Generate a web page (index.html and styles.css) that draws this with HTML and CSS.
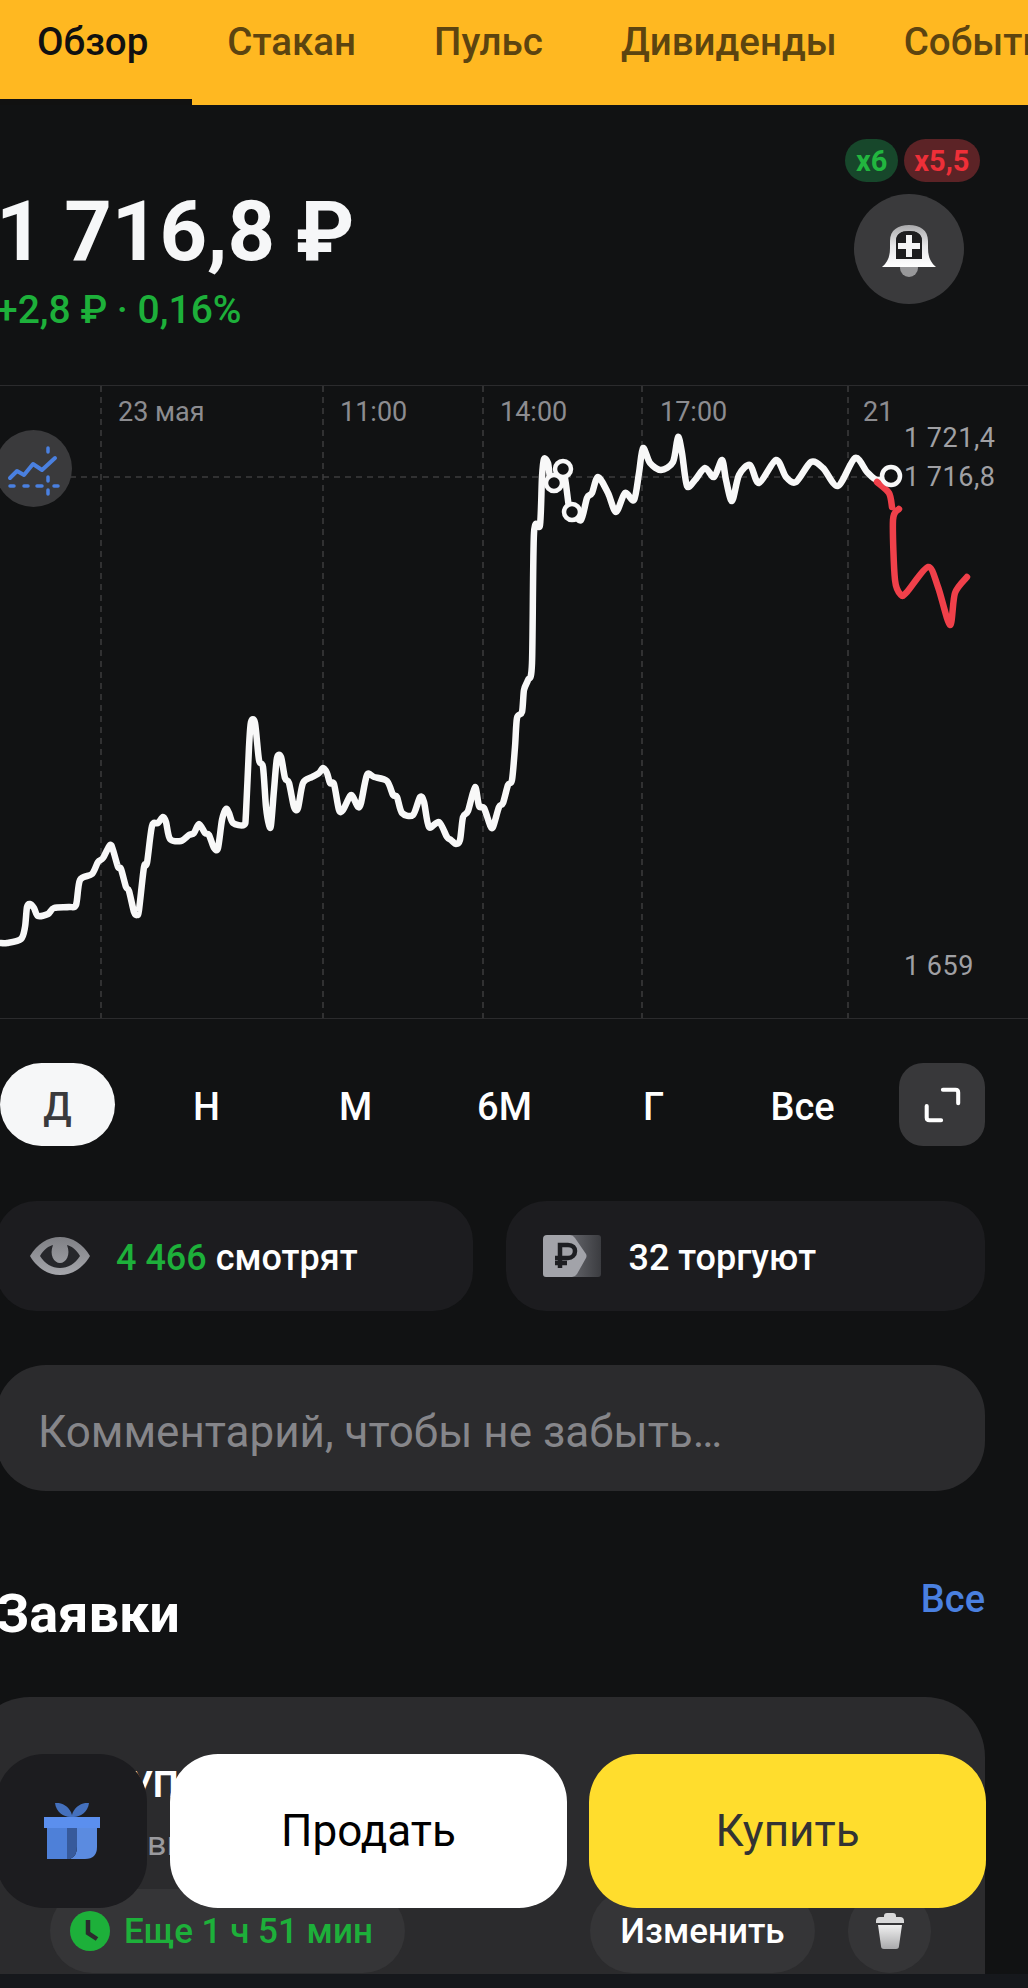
FILE: index.html
```html
<!DOCTYPE html>
<html lang="ru">
<head>
    <meta charset="utf-8">
    <title>Обзор</title>
    <link rel="stylesheet" href="styles.css">
</head>
<body>
<div class="page">
    <!-- top tabs -->
    <nav class="tabs">
        <a class="tab active">Обзор</a>
        <a class="tab">Стакан</a>
        <a class="tab">Пульс</a>
        <a class="tab">Дивиденды</a>
        <a class="tab tab-last">События</a>
    </nav>

    <main class="content">
        <!-- price -->
        <header class="quote">
            <div class="quote-left">
                <div class="price">1 716,8 ₽</div>
                <div class="change">+2,8 ₽ · 0,16%</div>
            </div>
            <div class="quote-right">
                <div class="chips">
                    <span class="chip chip-green">x6</span>
                    <span class="chip chip-red">x5,5</span>
                </div>
                <button class="bell">
                    <svg width="60" height="56" viewBox="0 0 60 56">
                        <defs>
                            <linearGradient id="bellGrad" x1="0" y1="0" x2="0" y2="1">
                                <stop offset="0" stop-color="#a9a9ab"/>
                                <stop offset="0.5" stop-color="#e8e8ea"/>
                                <stop offset="1" stop-color="#ffffff"/>
                            </linearGradient>
                        </defs>
                        <circle cx="30" cy="47" r="9" fill="#98989a"/>
                        <path d="M3 46 C9 41 11 35 11 27 V20 C11 9 19 4 30 4 C41 4 49 9 49 20 V27 C49 35 51 41 57 46 Z M17 38 H43 V20 C43 13 38 10 30 10 C22 10 17 13 17 20 Z" fill="url(#bellGrad)" fill-rule="evenodd"/>
                        <path d="M17 38 H43 V20 C43 13 38 10 30 10 C22 10 17 13 17 20 Z" fill="#1d1d1f"/>
                        <path d="M27 14 H33 V22 H41 V28 H33 V36 H27 V28 H19 V22 H27 Z" fill="#f4f4f5"/>
                    </svg>
                </button>
            </div>
        </header>

        <!-- chart -->
        <section class="chart">
            <svg class="chart-svg" width="1028" height="634" viewBox="0 385 1028 634">
                <g class="grid">
                    <line x1="101" y1="386" x2="101" y2="1018"/>
                    <line x1="323" y1="386" x2="323" y2="1018"/>
                    <line x1="483" y1="386" x2="483" y2="1018"/>
                    <line x1="642" y1="386" x2="642" y2="1018"/>
                    <line x1="848" y1="386" x2="848" y2="1018"/>
                    <line x1="70" y1="477" x2="895" y2="477"/>
                </g>
                <path class="line-white" data-points="0,943 7,943 21,939 25,927 27,907 30,904 34,908 38,916 48,914 54,908 69,907 76,905 80,880 92,874 98,862 103,858 110,845 113,850 118,867 121,869 126,887 129,891 134,912 137,915 139,910 144,867 147,863 152,826 158,823 163,817 166,822 170,839 181,841 189,835 194,833 199,824 205,833 209,835 214,848 218,848 222,820 226,809 229,813 233,823 244,825 246,813 249,747 251,722 255,723 259,760 263,767 266,807 269,825 271,825 274,790 277,758 281,757 285,778 289,783 294,807 298,808 303,783 312,777 319,773 323,768 327,773 330,783 334,784 339,810 343,810 350,796 353,797 358,807 361,803 367,775 374,777 387,781 393,795 397,797 402,813 413,815 420,797 424,802 429,827 439,822 447,837 451,840 456,844 460,840 463,817 468,811 475,787 479,806 484,808 490,825 493,827 499,807 503,803 508,785 512,780 515,747 517,718 522,712 524,690 528,680 532,663 534,533 540,525 542,477 544,459 548,463 550,477 554,483 563,469 569,507 572,512 581,520 587,498 592,493 598,477 608,493 616,512 625,493 634,500 639,473 643,448 650,463 661,470 673,462 678,437 682,453 687,486 695,480 705,468 714,477 722,460 726,480 732,501 739,475 750,465 759,483 776,460 786,477 796,482 811,462 823,468 838,486 855,458 867,472 877,480 891,476"/>
                <path class="line-red" data-points="877,482 889,493 892,507"/>
                <path class="line-red" data-points="899,509 893,520 895,580 901,595 907,592 928,567 938,587 950,625 955,593 967,577"/>
                <circle class="dot" cx="554" cy="483" r="8"/>
                <circle class="dot" cx="563" cy="469" r="8"/>
                <circle class="dot" cx="572" cy="512" r="8"/>
                <circle class="dot" cx="891" cy="476" r="9"/>
            </svg>

            <span class="time" style="left:118px">23 мая</span>
            <span class="time" style="left:340px">11:00</span>
            <span class="time" style="left:500px">14:00</span>
            <span class="time" style="left:660px">17:00</span>
            <span class="time time-cut" style="left:863px">21:00</span>

            <span class="level" style="top:37px">1 721,4</span>
            <span class="level" style="top:76px">1 716,8</span>
            <span class="level" style="top:565px">1 659</span>

            <button class="tools">
                <svg width="60" height="56" viewBox="0 0 60 56" fill="none" stroke="#4a80e0" stroke-linecap="round" stroke-linejoin="round">
                    <polyline points="6,37 13,30 20,34 29,23 38,29 51,17" stroke-width="4"/>
                    <path d="M6 45 H10 M20 45 H24 M33 45 H38 M50 45 H54" stroke-width="3.5"/>
                    <path d="M44 7 V11 M44 36 V40 M44 49 V53" stroke-width="3.5"/>
                </svg>
            </button>
        </section>

        <!-- period switch -->
        <div class="periods">
            <div class="period-list">
                <span class="period"><b class="period-pill selected">Д</b></span>
                <span class="period"><b class="period-pill">Н</b></span>
                <span class="period"><b class="period-pill">М</b></span>
                <span class="period"><b class="period-pill">6М</b></span>
                <span class="period"><b class="period-pill">Г</b></span>
                <span class="period"><b class="period-pill">Все</b></span>
            </div>
            <button class="expand">
                <svg width="38" height="36" viewBox="0 0 42 40" fill="none" stroke="#fff" stroke-width="4.5" stroke-linecap="round" stroke-linejoin="round">
                    <path d="M22 3 H36 Q39 3 39 6 V18"/>
                    <path d="M4 21 V34 Q4 37 7 37 H20"/>
                </svg>
            </button>
        </div>

        <!-- watchers -->
        <div class="stats">
            <div class="stat">
                <svg class="stat-icon" width="60" height="38" viewBox="0 0 60 38">
                    <defs>
                        <linearGradient id="eyeGrad" x1="0" y1="0" x2="0" y2="1">
                            <stop offset="0" stop-color="#7f8085"/>
                            <stop offset="1" stop-color="#a5a6ab"/>
                        </linearGradient>
                    </defs>
                    <path d="M0 19 C7 7 18 0 30 0 C42 0 53 7 60 19 C53 31 42 38 30 38 C18 38 7 31 0 19 Z" fill="url(#eyeGrad)"/>
                    <path d="M10 19 C14 12 19 9 23 8 C19 18 24 26 30 26 C36 26 41 18 37 8 C41 9 46 12 50 19 C45 27 38 31 30 31 C22 31 15 27 10 19 Z" fill="#26272b"/>
                </svg>
                <span class="stat-text"><span class="green">4 466</span> смотрят</span>
            </div>
            <div class="stat stat-second">
                <svg class="stat-icon" width="58" height="42" viewBox="0 0 58 42">
                    <defs>
                        <linearGradient id="backGrad" x1="0" y1="0" x2="1" y2="0">
                            <stop offset="0" stop-color="#707177"/>
                            <stop offset="1" stop-color="#3b3c40"/>
                        </linearGradient>
                    </defs>
                    <rect x="18" y="0" width="40" height="42" rx="3" fill="url(#backGrad)"/>
                    <path d="M4 0 H27 Q30 0 32 3 L43 19 Q44 21 43 23 L34 39 Q32 42 29 42 H3 Q0 42 0 39 V4 Q0 0 4 0 Z" fill="#a2a3a9"/>
                    <path d="M17 33 V10 H25 C30 10 32 13 32 16 C32 20 29 23 25 23 H12 M12 28 H24" fill="none" stroke="#1d1e22" stroke-width="4.5"/>
                </svg>
                <span class="stat-text">32 торгуют</span>
            </div>
        </div>

        <!-- comment field -->
        <div class="comment">Комментарий, чтобы не забыть…</div>

        <!-- orders -->
        <div class="orders-head">
            <h2>Заявки</h2>
            <a class="all-link">Все</a>
        </div>
        <section class="order-card">
            <div class="order-title">КУПЛЯ</div>
            <div class="order-sub">выставлена</div>
            <div class="order-actions">
                <span class="pill pill-time">
                    <svg width="40" height="40" viewBox="0 0 40 40">
                        <circle cx="20" cy="20" r="20" fill="#1db03a"/>
                        <path d="M18 9 V22 L27 28" fill="none" stroke="#2b2b2d" stroke-width="4.5"/>
                    </svg>
                    Еще 1 ч 51 мин
                </span>
                <span class="pill pill-edit">Изменить</span>
                <span class="pill pill-trash">
                    <svg width="28" height="36" viewBox="0 0 28 36">
                        <defs>
                            <linearGradient id="trashGrad" x1="0" y1="0" x2="0" y2="1">
                                <stop offset="0" stop-color="#f0f0f0"/>
                                <stop offset="1" stop-color="#a9a9ab"/>
                            </linearGradient>
                        </defs>
                        <path d="M8 3 Q8 0 11 0 H17 Q20 0 20 3 V4 H24 Q28 4 28 8 V10 H0 V8 Q0 4 4 4 H8 Z" fill="#d8d8d9"/>
                        <path d="M2 12 H26 L23 33 Q23 36 20 36 H8 Q5 36 5 33 Z" fill="url(#trashGrad)"/>
                    </svg>
                </span>
            </div>
        </section>
    </main>

    <div class="navbar"></div>

    <!-- floating buttons over the card -->
    <div class="actions">
        <button class="gift">
            <svg width="56" height="56" viewBox="0 0 56 56">
                <path d="M26 14 C20 14 12 9 11 0 C18 -1 26 4 28 12 C30 4 38 -1 45 0 C44 9 36 14 30 14 Z" fill="#4470bd"/>
                <rect x="0" y="14" width="56" height="11" fill="#5b8fee"/>
                <path d="M3 25 H23 V56 H3 Z" fill="#4e80d8"/>
                <path d="M33 25 H53 V44 Q53 56 41 56 H26 Q33 53 33 44 Z" fill="#5b8be0"/>
                <path d="M23 25 H33 V44 Q33 53 26 56 H23 Z" fill="#375a9b"/>
            </svg>
        </button>
        <button class="trade sell">Продать</button>
        <button class="trade buy">Купить</button>
    </div>
</div>
<script src="script.js"></script>
</body>
</html>
```

FILE: styles.css
```css
:root {
    --bg: #111213;
    --card: #2b2b2d;
    --card-dark: #1c1c1f;
    --green: #1db03a;
    --blue: #4a80e0;
    --muted: #8c8c90;
}

* {
    box-sizing: border-box;
}

body {
    margin: 0;
    background-color: var(--bg);
    color: #fff;
    font-family: Roboto, "Liberation Sans", sans-serif;
}

button {
    border: none;
    padding: 0;
    font-family: inherit;
    color: inherit;
}

.page {
    position: relative;
    display: flex;
    flex-direction: column;
    width: 1028px;
    height: 1988px;
    overflow: hidden;
}

/* Tabs */
.tabs {
    display: flex;
    flex: none;
    height: 105px;
    background-color: #ffb821;
    overflow: hidden;
    font-size: 38.5px;
    font-weight: 500;
    color: #5c4410;
}

.tab {
    flex: none;
    padding: 19px 39px 0;
    white-space: nowrap;
}

.tab.active {
    margin-right: -4px;
    padding: 19px 44px 0 37px;
    color: #111;
    border-bottom: 6px solid #111;
}

.tab-last {
    margin-left: -11px;
}

/* Content */
.content {
    flex: 1;
    min-height: 0;
    overflow: hidden;
}

.quote {
    display: flex;
    justify-content: space-between;
    height: 280px;
    padding-right: 48px;
}

.quote-left {
    margin-left: -4px;
    padding-top: 77px;
}

.price {
    font-size: 83px;
    font-weight: 700;
    line-height: 100px;
    color: #f6f7f8;
}

.change {
    margin-top: 8px;
    font-size: 39px;
    font-weight: 500;
    line-height: 40px;
    color: var(--green);
}

.quote-right {
    display: flex;
    flex-direction: column;
    align-items: flex-end;
    padding-top: 34px;
}

.chips {
    display: flex;
    gap: 6px;
}

.chip {
    display: block;
    height: 43px;
    padding: 0 10.5px;
    border-radius: 22px;
    font-size: 29px;
    font-weight: 700;
    line-height: 44px;
}

.chip-green {
    color: #22b63f;
    background-color: #17472b;
}

.chip-red {
    color: #ee2f38;
    background-color: #5c2326;
}

.bell {
    display: flex;
    align-items: center;
    justify-content: center;
    width: 110px;
    height: 110px;
    margin-top: 12px;
    margin-right: 16px;
    border-radius: 50%;
    background-color: #3a3a3c;
}

/* Chart */
.chart {
    position: relative;
    height: 634px;
    border-top: 1px solid #2b2b2d;
    border-bottom: 1px solid #2b2b2d;
}

.chart-svg {
    position: absolute;
    left: 0;
    top: -1px;
}

.grid line {
    stroke: #3c3c3e;
    stroke-width: 1.5;
    stroke-dasharray: 6 5;
}

.line-white,
.line-red {
    fill: none;
    stroke-width: 6.5;
    stroke-linecap: round;
    stroke-linejoin: round;
}

.line-white {
    stroke: #f8f8f8;
}

.line-red {
    stroke: #f0404a;
}

.dot {
    fill: #111213;
    stroke: #f8f8f8;
    stroke-width: 4.5;
}

.time,
.level {
    position: absolute;
    font-size: 27px;
    line-height: 30px;
    color: var(--muted);
    white-space: nowrap;
}

.time {
    top: 11px;
}

.time-cut {
    width: 29px;
    overflow: hidden;
}

.level {
    left: 904px;
    color: #a0a0a4;
    letter-spacing: 0.5px;
}

.tools {
    position: absolute;
    left: -5px;
    top: 44px;
    display: flex;
    align-items: center;
    justify-content: center;
    width: 77px;
    height: 77px;
    border-radius: 50%;
    background-color: #3a3a3c;
}

/* Periods */
.periods {
    display: flex;
    justify-content: space-between;
    height: 83px;
    margin-top: 44px;
    margin-left: -17px;
    padding-right: 43px;
}

.period-list {
    display: grid;
    grid-template-columns: repeat(6, 149px);
}

.period {
    display: flex;
    justify-content: center;
}

.period-pill {
    width: 115px;
    height: 83px;
    font-size: 38px;
    font-weight: 500;
    line-height: 88px;
    text-align: center;
    border-radius: 42px;
}

.period-pill.selected {
    color: #3a3a3c;
    background-color: #f6f7f8;
}

.expand {
    display: flex;
    align-items: center;
    justify-content: center;
    width: 86px;
    height: 83px;
    border-radius: 24px;
    background-color: #38383a;
}

/* Stats */
.stats {
    display: flex;
    gap: 33px;
    margin-top: 55px;
    margin-left: -4px;
    padding-right: 43px;
}

.stat {
    display: flex;
    flex: 1;
    align-items: center;
    height: 110px;
    padding-left: 34px;
    border-radius: 40px;
    background-color: var(--card-dark);
}

.stat-second {
    padding-left: 37px;
}

.stat-second .stat-text {
    margin-left: 28px;
}

.stat-text {
    margin-left: 26px;
    padding-top: 3px;
    font-size: 36px;
    font-weight: 500;
}

.green {
    color: var(--green);
}

/* Comment */
.comment {
    height: 126px;
    margin-top: 54px;
    margin-left: -4px;
    margin-right: 43px;
    padding-left: 42px;
    border-radius: 50px;
    background-color: var(--card);
    font-size: 44px;
    line-height: 134px;
    white-space: nowrap;
    color: #86868a;
}

/* Orders */
.orders-head {
    display: flex;
    justify-content: space-between;
    height: 206px;
    margin-left: -4px;
    padding-right: 43px;
}

.orders-head h2 {
    margin: 93px 0 0;
    font-size: 54px;
    font-weight: 700;
    line-height: 60px;
}

.all-link {
    margin-top: 88px;
    font-size: 38px;
    font-weight: 500;
    line-height: 40px;
    color: var(--blue);
}

.order-card {
    height: 300px;
    margin-left: -30px;
    margin-right: 43px;
    border-radius: 60px 60px 0 0;
    background-color: var(--card);
}

.order-title {
    padding: 66px 0 0 137px;
    font-size: 36px;
    font-weight: 700;
    line-height: 44px;
}

.order-sub {
    padding: 16px 0 0 177px;
    font-size: 34px;
    line-height: 40px;
    color: #9a9a9e;
}

.order-actions {
    display: flex;
    gap: 33px;
    margin-top: 26px;
    padding-left: 80px;
}

.pill {
    display: flex;
    align-items: center;
    height: 84px;
    border-radius: 42px;
    background-color: #353537;
    font-size: 35px;
    font-weight: 500;
    white-space: nowrap;
}

.pill-time {
    gap: 14px;
    width: 355px;
    padding-left: 20px;
    color: var(--green);
}

.pill-edit {
    justify-content: center;
    width: 225px;
    margin-left: 152px;
}

.pill-trash {
    justify-content: center;
    width: 83px;
}

.navbar {
    flex: none;
    height: 14px;
    background-color: #16181c;
}

/* Floating actions */
.actions {
    position: absolute;
    left: -4px;
    top: 1754px;
    display: flex;
    gap: 23px;
}

.gift {
    display: flex;
    align-items: center;
    justify-content: center;
    width: 151px;
    height: 154px;
    border-radius: 48px;
    background-color: var(--card-dark);
}

.trade {
    width: 397px;
    height: 154px;
    border-radius: 48px;
    font-size: 44px;
}

.sell {
    color: #000;
    background-color: #fff;
}

.buy {
    margin-left: -1px;
    color: #333;
    background-color: #ffdd2d;
}
```

FILE: script.js
```js
// turn the chart points into a smooth line
document.querySelectorAll('[data-points]').forEach(function (line) {
    var pts = line.dataset.points.split(' ').map(function (p) {
        return p.split(',').map(Number);
    });
    var d = 'M' + pts[0].join(' ');
    for (var i = 0; i < pts.length - 1; i++) {
        var p0 = pts[i - 1] || pts[i];
        var p1 = pts[i];
        var p2 = pts[i + 1];
        var p3 = pts[i + 2] || p2;
        var c1x = p1[0] + (p2[0] - p0[0]) / 7;
        var c1y = p1[1] + (p2[1] - p0[1]) / 7;
        var c2x = p2[0] - (p3[0] - p1[0]) / 7;
        var c2y = p2[1] - (p3[1] - p1[1]) / 7;
        d += ' C' + c1x + ' ' + c1y + ' ' + c2x + ' ' + c2y + ' ' + p2[0] + ' ' + p2[1];
    }
    line.setAttribute('d', d);
});
```
